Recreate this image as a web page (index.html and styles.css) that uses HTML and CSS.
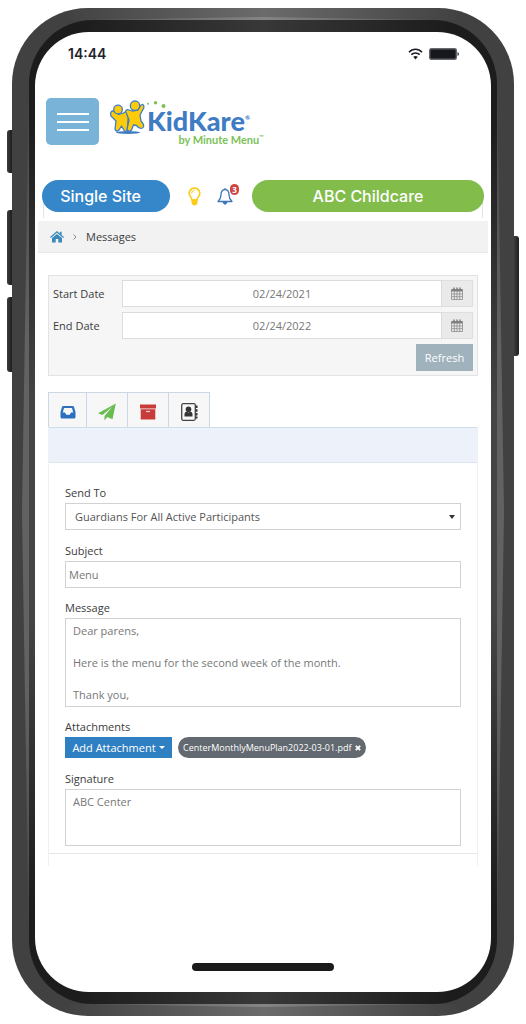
FILE: index.html
```html
<!DOCTYPE html>
<html lang="en">
<head>
  <meta charset="UTF-8">
  <meta name="viewport" content="width=device-width, initial-scale=1.0">
  <title>KidKare - Messages</title>
  <link rel="stylesheet" href="styles.css">
</head>
<body>

  <div class="phone">
    <span class="side-key key-mute"></span>
    <span class="side-key key-up"></span>
    <span class="side-key key-down"></span>
    <span class="side-key key-power"></span>
    <div class="bezel"></div>

    <div class="screen">
      <div class="status-bar">
        <span class="clock">14:44</span>
        <svg class="wifi" viewBox="0 0 15 12" aria-hidden="true">
          <path d="M1 4.200C4.600 0.300 10.400 0.300 14 4.200M3.300 6.600C5.600 4.300 9.400 4.300 11.700 6.600" fill="none" stroke="#1d1e24" stroke-width="1.500"/>
          <path d="M5.200 8.800Q7.500 7 9.800 8.800L7.500 11.500Z" fill="#1d1e24"/>
        </svg>
        <svg class="battery" viewBox="0 0 30 12" aria-hidden="true">
          <rect x="0.700" y="0.700" width="26.600" height="10.600" rx="1.500" fill="#17181d" stroke="#66676d" stroke-width="1.400"/>
          <path d="M28.500 4Q30 4.500 30 6T28.500 8Z" fill="#33343a"/>
        </svg>
      </div>

      <header class="header">
        <button class="menu-btn" aria-label="Menu"><span></span><span></span><span></span></button>
        <a class="logo" href="#">
          <svg class="logo-kids" viewBox="0 0 60 38" aria-hidden="true">
            <ellipse cx="18" cy="32.500" rx="12" ry="1.500" fill="#3f7cc4"/>
            <g fill="#fdcb0a" stroke="#3f7cc4" stroke-width="1.300" stroke-linejoin="round">
              <path d="M1.500 11.500Q0 13 1 16L6 21L5 29Q6 32.500 9 30L11.500 26L14.500 31Q17.500 32 17.500 28L18 20L19 12Q17 10 14.500 12.500L9 14.500L4 11.500Q2.500 10.500 1.500 11.500Z"/>
              <path d="M16.500 13.500Q14.500 10.500 17.500 9.500L22 11L28 10L31 5Q34.500 3.500 33.800 8L30 15L31 21Q35.500 26 32.500 28Q29.500 29.500 26.500 25.500L23.500 25L21.500 30Q18.500 33 17 29L19 20Z"/>
              <circle cx="8" cy="9.500" r="4.300"/>
              <circle cx="25" cy="5.700" r="4.700"/>
            </g>
            <circle cx="38" cy="3.700" r="1" fill="#7cc258"/>
            <circle cx="45.500" cy="2.700" r="1.700" fill="#7cc258"/>
            <circle cx="53.500" cy="6" r="2" fill="#7cc258"/>
          </svg>
          <span class="logo-text">
            <span class="logo-name">KidKare<sup>®</sup></span>
            <span class="logo-sub">by Minute Menu<sup>™</sup></span>
          </span>
        </a>
      </header>

      <div class="site-bar">
        <button class="pill pill-blue">Single Site</button>
        <button class="icon-btn" aria-label="Tips">
          <svg class="bulb" viewBox="0 0 13 19" aria-hidden="true">
            <path d="M6.500 1A5.300 5.300 0 0 0 2.200 9.300Q3.700 11 4 13H9Q9.300 11 10.800 9.300A5.300 5.300 0 0 0 6.500 1Z" fill="none" stroke="#fdca16" stroke-width="1.600"/>
            <path d="M3.600 6.500A3 3 0 0 1 6.500 3.500" fill="none" stroke="#fdca16"/>
            <path d="M3.500 12.500H9.500V16Q8.500 18.500 6.500 18.500T3.500 16Z" fill="#fdca16"/>
          </svg>
        </button>
        <button class="icon-btn" aria-label="Notifications">
          <svg class="bell" viewBox="0 0 16 18" aria-hidden="true">
            <path d="M8 2.500C5 2.500 4 5 4 8C4 11.500 2.500 13 1 14.500H15C13.500 13 12 11.500 12 8C12 5 11 2.500 8 2.500Z" fill="none" stroke="#3d76bb" stroke-width="1.300" stroke-linejoin="round"/>
            <path d="M8 1V2.500M6 15Q6.500 17.200 8 17.200T10 15Z" fill="#3d76bb" stroke="#3d76bb"/>
          </svg>
          <span class="badge">3</span>
        </button>
        <button class="pill pill-green">ABC Childcare</button>
      </div>

      <nav class="breadcrumb">
        <a href="#" aria-label="Home">
          <svg class="home" viewBox="0 0 14 12" aria-hidden="true">
            <path d="M7 0L9.800 2.400V0.800H11.600V4L14 6.100L13.200 7L7 1.800L0.800 7L0 6.100Z" fill="#3a8ab8"/>
            <path d="M7 2.900L12 7.100V11.500H8.300V8H5.700V11.500H2V7.100Z" fill="#3a8ab8"/>
          </svg>
        </a>
        <svg class="chevron" viewBox="0 0 4 6" aria-hidden="true"><path d="M0.500 0.500L3 3L0.500 5.500" fill="none" stroke="#8b8b8b"/></svg>
        <span>Messages</span>
      </nav>

      <main class="content">
        <form class="filter">
          <div class="filter-row">
            <label for="start">Start Date</label>
            <input id="start" type="text" value="02/24/2021">
            <button type="button" class="cal-btn" aria-label="Pick start date">
              <svg viewBox="0 0 12 13" aria-hidden="true">
                <path d="M0.500 2.500H11.500V12.500H0.500ZM0.500 7H11.500M0.500 9.700H11.500M3.300 4V12.500M6 4V12.500M8.700 4V12.500" fill="none" stroke="#8c8c8c" stroke-width="0.800"/>
                <path d="M0.500 2H11.500V4.500H0.500Z" fill="#808080"/>
                <path d="M3 0.500V3M6 0.500V3M9 0.500V3" stroke="#808080" stroke-width="1.500"/>
              </svg>
            </button>
          </div>
          <div class="filter-row">
            <label for="end">End Date</label>
            <input id="end" type="text" value="02/24/2022">
            <button type="button" class="cal-btn" aria-label="Pick end date">
              <svg viewBox="0 0 12 13" aria-hidden="true">
                <path d="M0.500 2.500H11.500V12.500H0.500ZM0.500 7H11.500M0.500 9.700H11.500M3.300 4V12.500M6 4V12.500M8.700 4V12.500" fill="none" stroke="#8c8c8c" stroke-width="0.800"/>
                <path d="M0.500 2H11.500V4.500H0.500Z" fill="#808080"/>
                <path d="M3 0.500V3M6 0.500V3M9 0.500V3" stroke="#808080" stroke-width="1.500"/>
              </svg>
            </button>
          </div>
          <button type="button" class="refresh-btn">Refresh</button>
        </form>

        <div class="tabs">
          <button class="tab" aria-label="Inbox">
            <svg viewBox="0 0 18 18" aria-hidden="true">
              <path d="M4.500 3H13.500Q14.500 3 15 4L16.500 9V14Q16.500 15.500 15 15.500H3Q1.500 15.500 1.500 14V9L3 4Q3.500 3 4.500 3ZM5 5L3.800 9.500H6L7.200 11.800H10.800L12 9.500H14.200L13 5Z" fill="#2c6fbe" fill-rule="evenodd"/>
            </svg>
          </button>
          <button class="tab" aria-label="Sent">
            <svg viewBox="0 0 18 18" aria-hidden="true">
              <path d="M17.800 0.500L0 10.200L4.500 12L14 4L6.500 13V17.500L9.300 14L14.500 16.300Z" fill="#69bd50"/>
            </svg>
          </button>
          <button class="tab" aria-label="Archive">
            <svg viewBox="0 0 18 18" aria-hidden="true">
              <path d="M1 1.500H17V5.500H1ZM1.700 6.300H16.300V16.500H1.700Z" fill="#c73c38"/>
              <path d="M7 8.500H11" stroke="#f5d5d4" stroke-width="1.200"/>
            </svg>
          </button>
          <button class="tab" aria-label="Contacts">
            <svg viewBox="0 0 18 18" aria-hidden="true">
              <rect x="1.700" y="0.700" width="13.600" height="16.600" rx="1.500" fill="none" stroke="#444" stroke-width="1.300"/>
              <path d="M16.500 2.500V15.500" stroke="#333" stroke-width="2" stroke-dasharray="2.500 1.200"/>
              <circle cx="8.500" cy="6.300" r="2.800" fill="#333"/>
              <path d="M4.500 13.500V11Q4.500 9 6.500 8.500L8.500 9.500L10.500 8.500Q12.500 9 12.500 11V13.500Z" fill="#333"/>
            </svg>
          </button>
        </div>

        <section class="panel">
          <div class="panel-head"></div>
          <form class="message-form">
            <label for="sendto">Send To</label>
            <div class="select-box">
              <select id="sendto">
                <option>Guardians For All Active Participants</option>
              </select>
            </div>

            <label for="subject">Subject</label>
            <input id="subject" type="text" value="Menu">

            <label for="message">Message</label>
            <textarea id="message" rows="5">Dear parens,

Here is the menu for the second week of the month.

Thank you,</textarea>

            <label for="attach">Attachments</label>
            <div class="attachments">
              <button type="button" id="attach" class="attach-btn">Add Attachment<span class="caret"></span></button>
              <span class="file-chip">CenterMonthlyMenuPlan2022-03-01.pdf
                <button type="button" aria-label="Remove file">
                  <svg viewBox="0 0 6 6" aria-hidden="true"><path d="M0.800 0.800L5.200 5.200M5.200 0.800L0.800 5.200" stroke="#fff" stroke-width="1.800"/></svg>
                </button>
              </span>
            </div>

            <label for="signature">Signature</label>
            <textarea id="signature" class="signature" rows="3">ABC Center</textarea>
          </form>
        </section>
      </main>

      <div class="home-indicator"></div>
    </div>
  </div>

</body>
</html>
```

FILE: styles.css
```css
* {
  box-sizing: border-box;
}

body {
  margin: 0;
  background-color: white;
  color: #3c3c3c;
  font-family: "Open Sans", sans-serif;
  font-size: 11px;
  line-height: 16px;
}

button,
input,
select,
textarea {
  margin: 0;
  padding: 0;
  border: none;
  border-radius: 0;
  font: inherit;
  color: inherit;
}

button {
  background: none;
  cursor: pointer;
}

svg {
  display: block;
}

/* Phone frame */
.phone {
  position: relative;
  display: flex;
  min-height: calc(100vh - 16px);
  margin: 8px 12px;
  padding: 24px 23px;
  border-radius: 76px;
  background:
    linear-gradient(to right, #414141 10%, #6b6b6b 50%, #414141 90%) top / 100% 12px no-repeat,
    linear-gradient(to right, #414141 10%, #6b6b6b 50%, #414141 90%) bottom / 100% 12px no-repeat,
    #414141;
}

/* light edges between the frame and the bezel */
.phone::before,
.phone::after {
  content: "";
  position: absolute;
}

.phone::before {
  inset: 76px 10px;
  background: linear-gradient(#484848, #626262 30%, #626262 70%, #484848);
  clip-path: polygon(7px 0, 0 50%, 7px 100%, calc(100% - 7px) 100%, 100% 50%, calc(100% - 7px) 0);
}

.phone::after {
  inset: 9px 76px;
  background: linear-gradient(to right, #555, #858585 50%, #555);
  clip-path: polygon(0 3px, 50% 0, 100% 3px, 100% calc(100% - 3px), 50% 100%, 0 calc(100% - 3px));
}

.bezel {
  position: absolute;
  z-index: 1;
  inset: 12px 17px;
  border-radius: 64px;
  background:
    linear-gradient(to right, #1c1c1c 10%, #383838 50%, #1c1c1c 90%) top / 100% 12px no-repeat,
    linear-gradient(to right, #1c1c1c 10%, #383838 50%, #1c1c1c 90%) bottom / 100% 12px no-repeat,
    linear-gradient(#1c1c1c 10%, #454545 40%, #454545 60%, #1c1c1c 90%);
}

.side-key {
  position: absolute;
  left: -5px;
  width: 5px;
  border-radius: 3px 0 0 3px;
  background: linear-gradient(to right, #3c3c3c, #1e1e1e);
}

.key-mute {
  top: 122px;
  height: 43px;
}

.key-up {
  top: 202px;
  height: 75px;
}

.key-down {
  top: 289px;
  height: 75px;
}

.key-power {
  top: 228px;
  right: -5px;
  left: auto;
  height: 120px;
  border-radius: 0 3px 3px 0;
}

.screen {
  position: relative;
  z-index: 2;
  display: flex;
  flex: 1;
  flex-direction: column;
  min-width: 0;
  border-radius: 54px;
  background-color: white;
}

/* Status bar */
.status-bar {
  display: flex;
  align-items: center;
  height: 44px;
  padding: 0 32px 0 33px;
}

.clock {
  flex: 1;
  color: #22232b;
  font-family: Inter, sans-serif;
  font-size: 14px;
  font-weight: 600;
}

.wifi {
  width: 15px;
  height: 12px;
  margin-right: 6px;
}

.battery {
  width: 30px;
  height: 12px;
}

/* Header */
.header {
  display: flex;
  gap: 11px;
  margin-top: 22px;
  padding: 0 11px;
}

.menu-btn {
  display: flex;
  flex-direction: column;
  align-items: center;
  justify-content: center;
  gap: 6px;
  width: 53px;
  height: 47px;
  border-radius: 5px;
  background-color: #79b3d8;
}

.menu-btn span {
  width: 32px;
  height: 2px;
  background-color: white;
}

.logo {
  display: flex;
  height: 47px;
  color: #3f7cc4;
  font-family: Lato, sans-serif;
  text-decoration: none;
}

.logo-kids {
  width: 60px;
  height: 38px;
  margin: 2px -23px 0 0;
}

.logo-text {
  display: flex;
  flex-direction: column;
  align-items: flex-end;
  padding-top: 11px;
}

.logo-name {
  margin-right: 14px;
  font-size: 27px;
  font-weight: 900;
  line-height: 24px;
}

.logo-sub {
  color: #7cc258;
  font-size: 11px;
  font-weight: 700;
  line-height: 14px;
}

.logo sup {
  font-size: 6px;
  line-height: 0;
  vertical-align: super;
}

.logo-name sup {
  vertical-align: 11px;
}

/* Site bar */
.site-bar {
  position: relative;
  display: flex;
  align-items: center;
  margin: 35px 7px 0;
  padding-bottom: 9px;
}

.site-bar::after {
  content: "";
  position: absolute;
  z-index: -1;
  inset: 16px 1px 3px;
  border-right: 1px solid #e3e3e3;
  border-left: 1px solid #e3e3e3;
}

.pill {
  height: 32px;
  border-radius: 16px;
  color: white;
  font-family: Inter, sans-serif;
  font-size: 16px;
  font-weight: 500;
}

.pill-blue {
  width: 128px;
  padding-right: 11px;
  background-color: #3587c9;
}

.pill-green {
  flex: 1;
  margin-left: 19px;
  background-color: #82bc4b;
}

.icon-btn {
  position: relative;
  margin-left: 18px;
}

.icon-btn + .icon-btn {
  margin-left: 16px;
}

.bulb {
  width: 13px;
  height: 19px;
}

.bell {
  width: 16px;
  height: 18px;
}

.badge {
  position: absolute;
  top: -3px;
  right: -6px;
  width: 9px;
  height: 11px;
  border-radius: 5px;
  background-color: #cd4543;
  color: white;
  font-size: 8px;
  font-weight: 700;
  line-height: 11px;
  text-align: center;
}

/* Breadcrumb */
.breadcrumb {
  display: flex;
  align-items: center;
  height: 32px;
  margin: 0 3px;
  padding: 0 12px;
  border-bottom: 1px solid #e8e8e8;
  background-color: #f2f2f2;
}

.home {
  width: 14px;
  height: 12px;
}

.chevron {
  width: 4px;
  height: 6px;
  margin: 0 9px;
}

/* Content */
.content {
  margin: 22px 13px 0;
}

.filter {
  display: flex;
  flex-direction: column;
  gap: 5px;
  padding: 4px;
  border: 1px solid #e3e3e3;
  background-color: #f6f6f6;
}

.filter-row {
  display: flex;
  height: 27px;
}

.filter-row label {
  width: 69px;
  line-height: 28px;
}

.filter-row input {
  flex: 1;
  min-width: 0;
  border: 1px solid #dcdcdc;
  background-color: white;
  color: #777;
  text-align: center;
}

.cal-btn {
  display: flex;
  align-items: center;
  justify-content: center;
  width: 31px;
  border: 1px solid #dfdfdf;
  border-left: none;
  background-color: #eaeaea;
}

.cal-btn svg {
  width: 12px;
  height: 13px;
}

.refresh-btn {
  align-self: flex-end;
  width: 57px;
  height: 27px;
  background-color: #a0b2bc;
  color: white;
}

/* Tabs */
.tabs {
  display: flex;
  margin-top: 16px;
}

.tab {
  display: flex;
  align-items: center;
  justify-content: center;
  width: 41px;
  height: 35px;
  padding-top: 4px;
  border: 1px solid #c9d8e4;
  border-bottom: none;
  border-left: none;
  background-color: #f7f7f7;
}

.tab:first-child {
  width: 39px;
  border-left: 1px solid #c9d8e4;
}

.tab svg {
  width: 18px;
  height: 18px;
}

.panel {
  padding-bottom: 12px;
  border-right: 1px solid #f0f0f3;
  border-left: 1px solid #f0f0f3;
}

.panel-head {
  height: 36px;
  border-top: 1px solid #cfdde8;
  border-bottom: 1px solid #dbe6f0;
  background-color: #edf2fa;
}

/* Message form */
.message-form {
  display: flex;
  flex-direction: column;
  padding: 22px 16px 7px;
  border-bottom: 1px solid #e6e7ec;
}

.message-form label {
  margin-bottom: 2px;
}

.message-form > input,
.message-form select,
.message-form textarea {
  width: 100%;
  border: 1px solid #d2d2d2;
  background-color: white;
}

.message-form > input {
  height: 27px;
  margin-bottom: 12px;
  padding: 0 3px;
  color: #777;
}

.select-box {
  position: relative;
  margin-bottom: 13px;
}

.select-box::after {
  content: "";
  position: absolute;
  top: 12px;
  right: 6px;
  border-top: 4px solid #333;
  border-right: 3px solid transparent;
  border-left: 3px solid transparent;
}

.message-form select {
  display: block;
  height: 27px;
  padding: 0 9px;
  color: #555;
  appearance: none;
}

.message-form textarea {
  display: block;
  height: 89px;
  margin-bottom: 12px;
  padding: 4px 7px;
  color: #777;
  resize: none;
  overflow: hidden;
}

.message-form .signature {
  height: 57px;
  margin-bottom: 0;
}

.attachments {
  display: flex;
  gap: 6px;
  margin-bottom: 13px;
}

.attach-btn {
  display: flex;
  align-items: center;
  justify-content: center;
  gap: 3px;
  width: 107px;
  height: 21px;
  background-color: #2f80c2;
  color: white;
}

.caret {
  border-top: 3px solid white;
  border-right: 3px solid transparent;
  border-left: 3px solid transparent;
}

.file-chip {
  display: flex;
  align-items: center;
  gap: 4px;
  height: 21px;
  padding: 0 5px;
  border-radius: 11px;
  background-color: #626970;
  color: white;
  font-size: 9px;
  white-space: nowrap;
}

.file-chip svg {
  width: 6px;
  height: 6px;
}

.home-indicator {
  width: 142px;
  height: 8px;
  margin: auto auto 21px;
  border-radius: 4px;
  background-color: #1b1b1b;
}
```
